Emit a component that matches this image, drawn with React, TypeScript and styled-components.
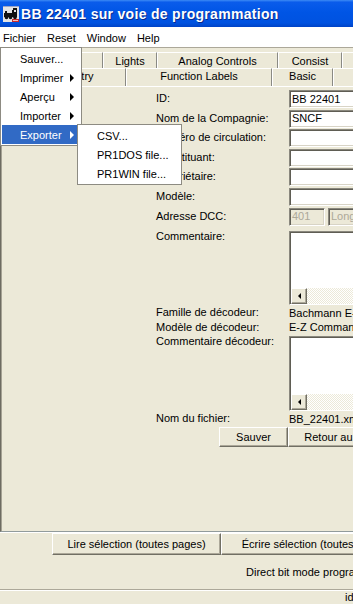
import React from 'react';
import styled, { createGlobalStyle } from 'styled-components';

const xp = {
  face: '#ECE9D8',
  shadow: '#ACA899',
  dark: '#716F64',
  tabLine: '#919B9C',
  select: '#316AC5',
  grayText: '#ACA899',
};

const GlobalStyle = createGlobalStyle`
  *, *::before, *::after { box-sizing: border-box; }
  html, body { margin: 0; padding: 0; background: ${xp.face}; }
  body {
    font-family: "Liberation Sans", Arial, sans-serif;
    font-size: 11px;
    color: #000;
  }
`;

const Window = styled.div`
  position: relative;
  width: 353px;
  height: 604px;
  overflow: hidden;
  display: flex;
  flex-direction: column;
  background: ${xp.face};
`;

const TitleBar = styled.div`
  flex: 0 0 27px;
  display: flex;
  align-items: center;
  gap: 2px;
  padding-left: 3px;
  background: linear-gradient(to bottom, #3d8bf5 0%, #0a5ceb 8%, #0055e5 45%, #0052e0 85%, #0043c6 100%);
`;

const TitleText = styled.span`
  font: bold 14px "Liberation Sans", Arial, sans-serif;
  letter-spacing: 0.3px;
  color: #fff;
  white-space: nowrap;
  text-shadow: 1px 1px 0 #0b2a8c;
`;

const MenuBar = styled.div`
  flex: 0 0 21px;
  display: flex;
  align-items: center;
  gap: 11px;
  padding: 1px 0 0 3px;
  background: #fff;
  border-bottom: 1px solid ${xp.shadow};
`;

const MenuTitle = styled.span`
  white-space: nowrap;
`;

const TabStrip = styled.div`
  flex: 0 0 38px;
  display: flex;
  flex-direction: column;
  padding-top: 4px;
`;

const TabRun = styled.div<{ $offset: number; $height: number }>`
  display: flex;
  height: ${p => p.$height}px;
  margin-left: ${p => p.$offset}px;
`;

const Tab = styled.div<{ $w: number; $lift?: number }>`
  flex: 0 0 ${p => p.$w}px;
  display: flex;
  align-items: center;
  justify-content: center;
  padding-bottom: ${p => p.$lift ?? 0}px;
  white-space: nowrap;
  overflow: hidden;
  border-top: 1px solid #fff;
  border-left: 1px solid #fff;
  border-right: 1px solid #8a8a84;
`;

const ContentPanel = styled.div`
  flex: 1;
  overflow: hidden;
  border-top: 1px solid #fff;
  border-left: 1px solid #6e6c62;
  border-bottom: 1px solid ${xp.tabLine};
  box-shadow: inset 1px 0 0 #a5a294;
`;

const Form = styled.div`
  display: flex;
  flex-direction: column;
  padding: 3px 0 0 155px;
`;

const Row = styled.div<{ $h?: number; $top?: number; $gap?: number }>`
  display: grid;
  grid-template-columns: 133px 120px;
  align-items: center;
  height: ${p => (p.$h ? `${p.$h}px` : 'auto')};
  margin-top: ${p => p.$top ?? 0}px;
  margin-bottom: ${p => p.$gap ?? 0}px;
  white-space: nowrap;
`;

const Label = styled.span<{ $top?: boolean }>`
  align-self: ${p => (p.$top ? 'start' : 'center')};
  line-height: 13px;
  margin-top: -1px;
`;

const Value = styled.span`
  white-space: nowrap;
  margin-top: -1px;
`;

const TextField = styled.div<{ $disabled?: boolean; $w?: number }>`
  height: 18px;
  width: ${p => (p.$w ? `${p.$w}px` : '100%')};
  display: flex;
  align-items: center;
  padding: 0 0 1px 2px;
  background: ${p => (p.$disabled ? xp.face : '#fff')};
  color: ${p => (p.$disabled ? xp.grayText : '#000')};
  border: 1px solid;
  border-color: #8a887e #fff #fff #8a887e;
  box-shadow: inset 1px 1px 0 #5f5d54, inset -1px -1px 0 #d8d4c6;
`;

const AddressBox = styled.div`
  display: flex;
  gap: 3px;
`;

const TextArea = styled.div<{ $h: number }>`
  height: ${p => p.$h}px;
  display: flex;
  flex-direction: column;
  background: #fff;
  border: 1px solid;
  border-color: #8a887e #fff #fff #8a887e;
  box-shadow: inset 1px 1px 0 #5f5d54;
  padding: 1px 0 0 1px;
`;

const TextAreaBody = styled.div`
  flex: 1;
`;

const HScrollBar = styled.div`
  flex: 0 0 16px;
  display: flex;
  background: repeating-conic-gradient(${xp.face} 0 25%, #fff 0 50%) 0 0 / 2px 2px;
`;

const ScrollArrow = styled.div`
  flex: 0 0 16px;
  display: flex;
  align-items: center;
  justify-content: center;
  background: ${xp.face};
  border: 1px solid;
  border-color: #fff ${xp.dark} ${xp.dark} #fff;
  box-shadow: inset -1px -1px 0 ${xp.shadow};

  &::before {
    content: '';
    border-right: 3px solid #000;
    border-top: 3px solid transparent;
    border-bottom: 3px solid transparent;
  }
`;

const ButtonRow = styled.div<{ $indent: number }>`
  display: flex;
  margin-left: ${p => p.$indent}px;
  margin-top: 1px;
`;

const PushButton = styled.div<{ $w: number; $h: number }>`
  flex: 0 0 ${p => p.$w}px;
  height: ${p => p.$h}px;
  display: flex;
  align-items: center;
  justify-content: center;
  white-space: nowrap;
  overflow: hidden;
  background: ${xp.face};
  border: 1px solid;
  border-color: #fff ${xp.dark} ${xp.dark} #fff;
  box-shadow: inset -1px -1px 0 ${xp.shadow};
`;

const ActionBar = styled.div`
  flex: 0 0 24px;
  display: flex;
  padding-left: 52px;
  border-top: 1px solid #fff;
`;

const StatusLine = styled.div`
  flex: 0 0 33px;
  line-height: 33px;
  padding-left: 246px;
  white-space: nowrap;
`;

const StatusBar = styled.div`
  flex: 0 0 9px;
  padding: 1px 0 0 345px;
  line-height: 13px;
  white-space: nowrap;
  border-top: 1px solid ${xp.shadow};
  box-shadow: inset 0 1px 0 #fff;
`;

const PopupMenu = styled.div<{ $left: number; $top: number; $w: number }>`
  position: absolute;
  left: ${p => p.$left}px;
  top: ${p => p.$top}px;
  width: ${p => p.$w}px;
  padding: 1px;
  background: #fff;
  border: 1px solid #8d8b82;
  z-index: 10;
`;

const MenuItem = styled.div<{ $active?: boolean }>`
  position: relative;
  height: 19px;
  display: flex;
  align-items: center;
  padding-left: 18px;
  white-space: nowrap;
  background: ${p => (p.$active ? xp.select : 'transparent')};
  color: ${p => (p.$active ? '#fff' : '#000')};
`;

const SubArrow = styled.span`
  position: absolute;
  right: 6px;
  top: 6px;
  border-left: 4px solid currentColor;
  border-top: 4px solid transparent;
  border-bottom: 4px solid transparent;
`;

const AppIcon = () => (
  <svg width="16" height="16" viewBox="0 0 16 16">
    <rect x="0" y="0" width="16" height="16" fill="#e4e4e4" />
    <rect x="0" y="0" width="16" height="1" fill="#9aa4c8" />
    <path d="M1 7h8V4h1V2h4v9H1z" fill="#111" />
    <rect x="11" y="4" width="2" height="2" fill="#e4e4e4" />
    <rect x="2" y="5" width="2" height="2" fill="#111" />
    <circle cx="3.5" cy="11.5" r="1.8" fill="#111" />
    <circle cx="7.5" cy="11.5" r="1.8" fill="#111" />
    <circle cx="12" cy="11.5" r="1.8" fill="#111" />
    <rect x="9" y="13" width="7" height="3" fill="#c92b2b" />
    <rect x="10" y="14" width="5" height="1" fill="#f2c0c0" />
  </svg>
);

// first back-row tab sits entirely under the open menu
const backTabs = [
  { label: '', w: 101 },
  { label: 'Lights', w: 54 },
  { label: 'Analog Controls', w: 121 },
  { label: 'Consist', w: 64 },
  { label: 'Advanced', w: 80 },
];

const frontTabs = [
  { label: 'Roster Entry', w: 126 },
  { label: 'Function Labels', w: 146 },
  { label: 'Basic', w: 61 },
  { label: 'Motor', w: 80 },
];

const simpleFields = [
  { label: 'ID:', value: 'BB 22401' },
  { label: 'Nom de la Compagnie:', value: 'SNCF' },
  { label: 'Numéro de circulation:', value: '' },
  { label: 'Constituant:', value: '' },
  { label: 'Propriétaire:', value: '' },
  { label: 'Modèle:', value: '' },
];

const fileMenu = [
  { label: 'Sauver...', sub: false },
  { label: 'Imprimer', sub: true },
  { label: 'Aperçu', sub: true },
  { label: 'Importer', sub: true },
  { label: 'Exporter', sub: true, active: true },
];

const exportMenu = ['CSV...', 'PR1DOS file...', 'PR1WIN file...'];

export default function App() {
  return (
    <>
      <GlobalStyle />
      <Window>
        <TitleBar>
          <AppIcon />
          <TitleText>BB 22401 sur voie de programmation</TitleText>
        </TitleBar>

        <MenuBar>
          {['Fichier', 'Reset', 'Window', 'Help'].map(m => (
            <MenuTitle key={m}>{m}</MenuTitle>
          ))}
        </MenuBar>

        <TabStrip>
          <TabRun $offset={2} $height={16}>
            {backTabs.map((t, i) => (
              <Tab key={i} $w={t.w}>{t.label}</Tab>
            ))}
          </TabRun>
          <TabRun $offset={0} $height={18}>
            {frontTabs.map(t => (
              <Tab key={t.label} $w={t.w} $lift={3}>{t.label}</Tab>
            ))}
          </TabRun>
        </TabStrip>

        <ContentPanel>
          <Form>
            {simpleFields.map(f => (
              <Row key={f.label} $h={18} $gap={1.6}>
                <Label>{f.label}</Label>
                <TextField>{f.value}</TextField>
              </Row>
            ))}
            <Row $h={18}>
              <Label>Adresse DCC:</Label>
              <AddressBox>
                <TextField $disabled $w={36}>401</TextField>
                <TextField $disabled $w={80}>Long</TextField>
              </AddressBox>
            </Row>
            <Row $top={5.6}>
              <Label $top>Commentaire:</Label>
              <TextArea $h={74}>
                <TextAreaBody />
                <HScrollBar><ScrollArrow /></HScrollBar>
              </TextArea>
            </Row>
            <Row $h={14.5} $top={1}>
              <Label>Famille de décodeur:</Label>
              <Value>Bachmann E-Z Command</Value>
            </Row>
            <Row $h={14.5}>
              <Label>Modèle de décodeur:</Label>
              <Value>E-Z Command Decoder</Value>
            </Row>
            <Row $top={1}>
              <Label $top>Commentaire décodeur:</Label>
              <TextArea $h={75}>
                <TextAreaBody />
                <HScrollBar><ScrollArrow /></HScrollBar>
              </TextArea>
            </Row>
            <Row $h={14} $top={1}>
              <Label>Nom du fichier:</Label>
              <Value>BB_22401.xml</Value>
            </Row>
            <ButtonRow $indent={63}>
              <PushButton $w={69} $h={20}>Sauver</PushButton>
              <PushButton $w={150} $h={20}>Retour au programmeur</PushButton>
            </ButtonRow>
          </Form>
        </ContentPanel>

        <ActionBar>
          <PushButton $w={169} $h={22}>Lire sélection (toutes pages)</PushButton>
          <PushButton $w={190} $h={22}>Écrire sélection (toutes pages)</PushButton>
        </ActionBar>

        <StatusLine>Direct bit mode programming</StatusLine>
        <StatusBar>idle</StatusBar>

        <PopupMenu $left={0} $top={47} $w={82}>
          {fileMenu.map(i => (
            <MenuItem key={i.label} $active={i.active}>
              {i.label}
              {i.sub && <SubArrow />}
            </MenuItem>
          ))}
        </PopupMenu>

        <PopupMenu $left={77} $top={124} $w={105}>
          {exportMenu.map(i => (
            <MenuItem key={i}>{i}</MenuItem>
          ))}
        </PopupMenu>
      </Window>
    </>
  );
}
